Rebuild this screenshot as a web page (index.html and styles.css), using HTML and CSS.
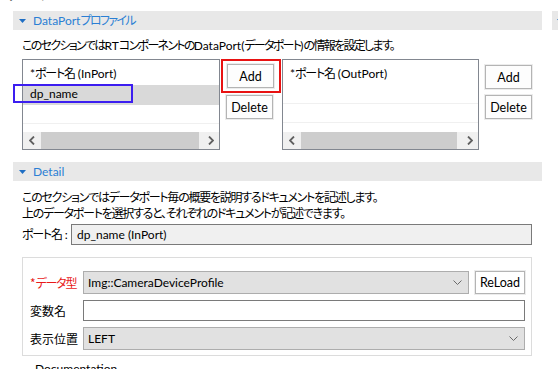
FILE: index.html
```html
<!DOCTYPE html>
<html lang="ja">
<head>
<meta charset="utf-8">
<title>DataPort</title>
<link rel="stylesheet" href="styles.css">
</head>
<body>
<div class="title"><span>データポート</span></div>
<div class="cols">
  <div class="main">
    <section class="sec">
      <div class="sec-head">
        <svg class="tri" viewBox="0 0 7 4"><polygon points="0,0 7,0 3.5,4"/></svg>
        <span>DataPort<span class="j">プロファイル</span></span>
      </div>
      <div class="sec-body">
        <p class="desc desc1"><span class="j">このセクションでは</span>RT<span class="j">コンポーネントの</span>DataPort(<span class="j">データポート</span>)<span class="j">の情報を設定します。</span></p>
        <div class="ports">
          <div class="table t-in">
            <div class="thead">*<span class="j">ポート名</span> (InPort)</div>
            <div class="row sel">dp_name</div>
            <div class="row"></div>
            <div class="fill"></div>
            <div class="hscroll">
              <span class="arrow"><svg viewBox="0 0 6 9"><polyline points="5,0.5 1,4.5 5,8.5"/></svg></span>
              <span class="thumb thumb-in"></span>
              <span class="track"></span>
              <span class="arrow"><svg viewBox="0 0 6 9"><polyline points="1,0.5 5,4.5 1,8.5"/></svg></span>
            </div>
            <div class="focus-box"></div>
          </div>
          <div class="btns btns-l">
            <div class="hl"><button class="btn">Add</button></div>
            <button class="btn btn-del">Delete</button>
          </div>
          <div class="table t-out">
            <div class="thead">*<span class="j">ポート名</span> (OutPort)</div>
            <div class="row"></div>
            <div class="row"></div>
            <div class="fill"></div>
            <div class="hscroll">
              <span class="arrow"><svg viewBox="0 0 6 9"><polyline points="5,0.5 1,4.5 5,8.5"/></svg></span>
              <span class="thumb thumb-out"></span>
              <span class="track"></span>
              <span class="arrow"><svg viewBox="0 0 6 9"><polyline points="1,0.5 5,4.5 1,8.5"/></svg></span>
            </div>
          </div>
          <div class="btns btns-r">
            <button class="btn">Add</button>
            <button class="btn">Delete</button>
          </div>
        </div>
      </div>
    </section>

    <section class="sec sec-detail">
      <div class="sec-head">
        <svg class="tri" viewBox="0 0 7 4"><polygon points="0,0 7,0 3.5,4"/></svg>
        <span>Detail</span>
      </div>
      <div class="sec-body">
        <p class="desc desc2 j">このセクションではデータポート毎の概要を説明するドキュメントを記述します。<br>上のデータポートを選択すると、それぞれのドキュメントが記述できます。</p>
        <div class="name-row">
          <span class="name-label"><span class="j">ポート名</span> :</span>
          <div class="name-input">dp_name (InPort)</div>
        </div>
        <div class="group">
          <span class="lbl req">*<span class="j">データ型</span></span>
          <div class="field">
            <div class="combo combo-type"><span>Img::CameraDeviceProfile</span><svg class="chev" viewBox="0 0 9 5"><polyline points="0.5,0.5 4.5,4.5 8.5,0.5"/></svg></div>
            <button class="btn btn-reload">ReLoad</button>
          </div>
          <span class="lbl">変数名</span>
          <div class="field"><div class="text-input"></div></div>
          <span class="lbl">表示位置</span>
          <div class="field"><div class="combo"><span>LEFT</span><svg class="chev" viewBox="0 0 9 5"><polyline points="0.5,0.5 4.5,4.5 8.5,0.5"/></svg></div></div>
        </div>
        <fieldset class="doc">
          <legend>Documentation</legend>
          <div class="doc-body"></div>
        </fieldset>
      </div>
    </section>
  </div>
  <div class="side">
    <div class="sec-head">
      <svg class="tri" viewBox="0 0 7 4"><polygon points="0,0 7,0 3.5,4"/></svg>
      <span>Documentation</span>
    </div>
  </div>
</div>
</body>
</html>
```

FILE: styles.css
```css
* { box-sizing: border-box; }

html, body {
  margin: 0;
  padding: 0;
}

body {
  width: 558px;
  height: 369px;
  overflow: hidden;
  background: #ffffff;
  color: #000000;
  font-family: "Lato", "Noto Sans CJK JP", sans-serif;
  font-size: 12px;
  line-height: 16px;
  font-feature-settings: "palt";
}

.j {
  font-family: "Noto Sans CJK JP", sans-serif;
  letter-spacing: -1.25px;
}

.desc1 .j {
  letter-spacing: -1.7px;
}

.title {
  height: 4px;
  overflow: hidden;
  padding-left: 6px;
}

.title span {
  display: block;
  font-family: "Noto Sans CJK JP", sans-serif;
  font-size: 17px;
  font-weight: bold;
  line-height: 20px;
  margin-top: -18px;
}

.cols {
  display: flex;
  margin-top: 7px;
}

.main {
  flex: none;
  width: 529px;
  margin-left: 13px;
}

.side {
  flex: none;
  width: 120px;
  margin-left: 10px;
}

.sec-head {
  height: 19px;
  background: #e8e8e8;
  display: flex;
  align-items: center;
  color: #2a7fd4;
  font-size: 12px;
  white-space: nowrap;
}

.sec-head .j {
  letter-spacing: -1.6px;
}

.tri {
  flex: none;
  width: 7px;
  height: 4px;
  margin-left: 6px;
  margin-right: 7px;
  fill: #1f6fc4;
}

.side .tri {
  margin-left: 5px;
}

.sec-body {
  padding: 0 10px 0 9px;
}

.desc {
  margin: 7px 0 0;
  line-height: 16px;
  white-space: nowrap;
}

.ports {
  display: flex;
  margin-top: 5px;
}

.table {
  position: relative;
  flex: none;
  height: 91px;
  border: 1px solid #828790;
  display: flex;
  flex-direction: column;
}

.t-in { width: 198px; }
.t-out { width: 197px; }

.thead {
  height: 25px;
  line-height: 25px;
  padding-left: 7px;
  white-space: nowrap;
}

.row {
  height: 19px;
  line-height: 18px;
  padding-left: 7px;
  border-bottom: 1px solid #f0f0f0;
}

.row.sel {
  background: #d9d9d9;
  border-bottom-color: #d9d9d9;
  height: 20px;
}

.t-out .row:first-of-type { height: 20px; }

.fill { flex: 1; }

.hscroll {
  flex: none;
  height: 17px;
  background: #f0f0f0;
  display: flex;
  align-items: stretch;
}

.arrow {
  flex: none;
  width: 17px;
  display: flex;
  align-items: center;
  justify-content: center;
}

.arrow svg {
  width: 6px;
  height: 9px;
  fill: none;
  stroke: #606060;
  stroke-width: 1.8;
}

.thumb {
  flex: none;
  background: #cdcdcd;
  margin: 0 0 0 1px;
}

.thumb-in { width: 158px; }
.thumb-out { width: 156px; }

.track { flex: 1; }

.focus-box {
  position: absolute;
  left: -10px;
  top: 24px;
  width: 120px;
  height: 19px;
  border: 2px solid #3c1ef0;
}

.btn {
  display: block;
  width: 47px;
  height: 24px;
  padding: 0;
  margin: 0;
  background: #fdfdfd;
  border: 1px solid #b4b4b4;
  box-shadow: 0 0 0 1px #ececec;
  font-family: "Lato", "Noto Sans CJK JP", sans-serif;
  font-size: 12.5px;
  color: #000000;
}

.btns {
  flex: none;
  display: flex;
  flex-direction: column;
  align-items: flex-start;
}

.btns-l {
  width: 61px;
  margin-left: 1px;
}

.hl {
  width: 60px;
  height: 34px;
  border: 2px solid #e81212;
  padding: 3px 4px;
}

.btn-del {
  margin: 2px 0 0 5px;
}

.btns-r {
  margin-left: 6px;
  padding-top: 6px;
  gap: 6px;
}

.sec-detail {
  margin-top: 12px;
}

.desc2 {
  margin-top: 8px;
}

.name-row {
  display: flex;
  align-items: center;
  margin-top: 3px;
}

.name-label {
  flex: none;
  width: 49px;
  white-space: nowrap;
}

.name-input {
  flex: 1;
  height: 21px;
  line-height: 19px;
  background: #f0f0f0;
  border: 1px solid #7a7a7a;
  padding-left: 5px;
}

.group {
  margin-top: 12px;
  border: 1px solid #dcdcdc;
  padding: 13px 6px 5px 7px;
  display: grid;
  grid-template-columns: 53px 1fr;
  row-gap: 6px;
  align-items: center;
}

.lbl {
  white-space: nowrap;
  font-family: "Noto Sans CJK JP", sans-serif;
}

.req {
  color: #e81a1a;
}

.field {
  display: flex;
  align-items: center;
}

.combo {
  flex: 1;
  height: 23px;
  background: #e1e1e1;
  border: 1px solid #adadad;
  display: flex;
  align-items: center;
  justify-content: space-between;
  padding: 0 6px 0 4px;
}

.chev {
  flex: none;
  width: 9px;
  height: 5px;
  fill: none;
  stroke: #6a6a6a;
  stroke-width: 1;
}

.btn-reload {
  flex: none;
  width: 50px;
  height: 23px;
  margin-left: 6px;
  background: #ffffff;
}

.text-input {
  flex: 1;
  height: 21px;
  background: #ffffff;
  border: 1px solid #7a7a7a;
}

.doc {
  margin: 5px 0 0;
  padding: 0 8px;
  border: 1px solid #dcdcdc;
  min-width: 0;
}

.doc legend {
  margin-left: 2px;
  padding: 0 2px;
  line-height: 16px;
}

.doc-body {
  height: 40px;
}
```
